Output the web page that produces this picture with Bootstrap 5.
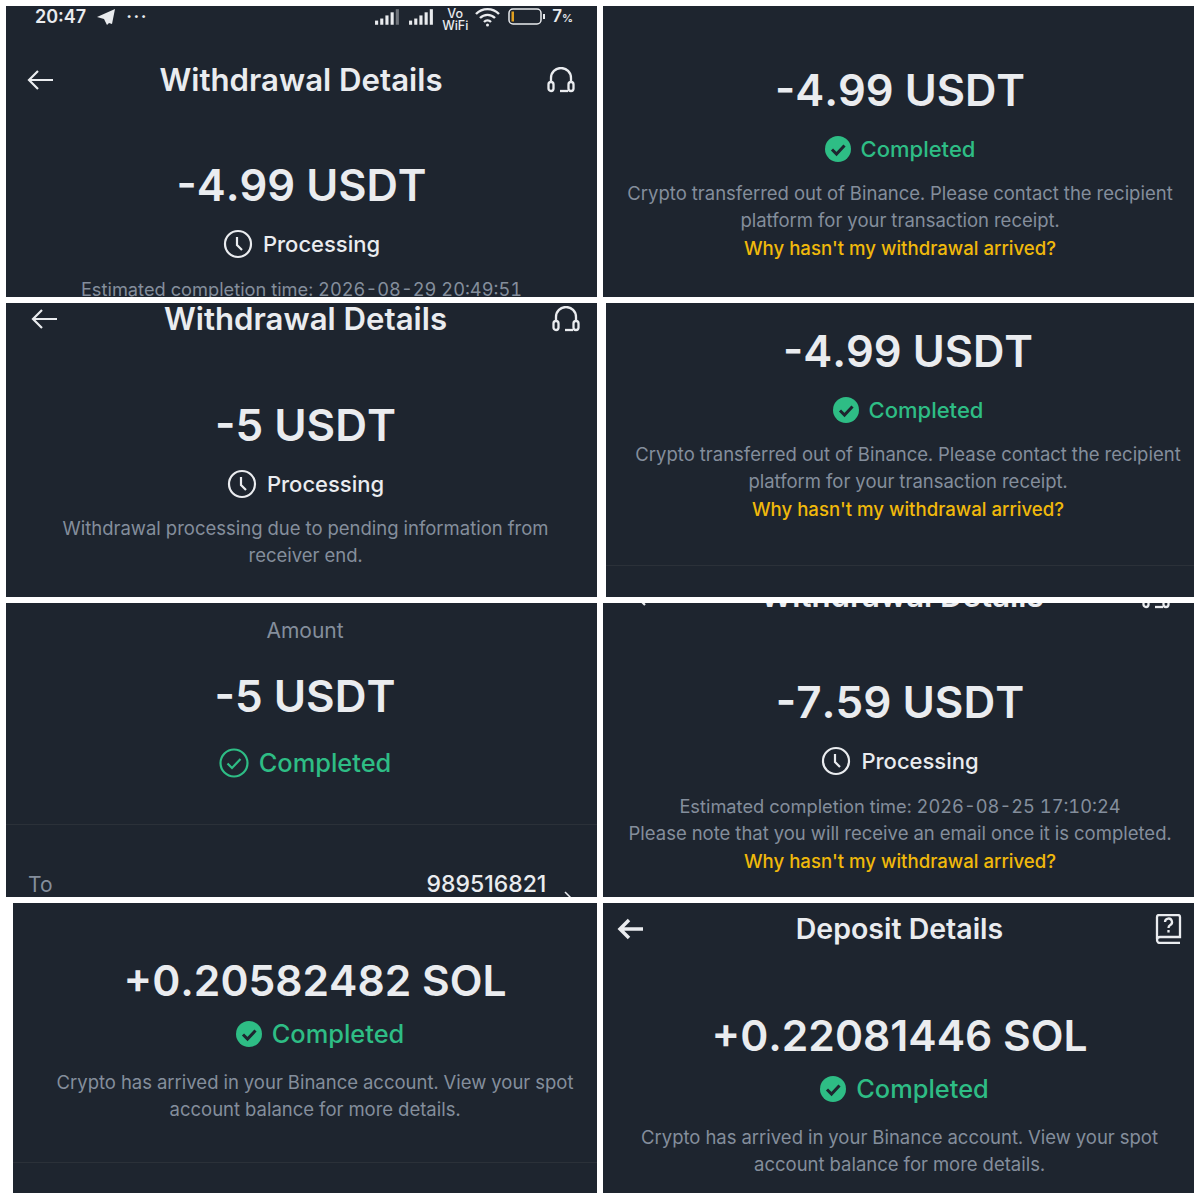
<!DOCTYPE html>
<html lang="en">

<head>
    <meta charset="UTF-8">
    <meta name="viewport" content="width=device-width, initial-scale=1.0">
    <title>Transaction details</title>
    <link href="https://cdn.jsdelivr.net/npm/bootstrap@5.3.3/dist/css/bootstrap.min.css" rel="stylesheet">
    <style>
        body { background: #fff; font-family: Inter, "Liberation Sans", sans-serif; }
        .collage { width: 1200px; height: 1200px; padding: 6px 6px 6px 6px; gap: 6px; }
        .side { width: 591px; gap: 6px; }
        .pane { background: #1e252f; overflow: hidden; flex: none; }
        .h-a { height: 291px; }
        .h-b { height: 294px; }
        .h-c { height: 294px; }
        .h-d { height: 290px; }
        .inset-a { margin-left: 7px; }
        .inset-b { margin-left: 3px; }

        .status-bar { height: 22px; padding: 0 24px 0 29px; color: #e9ebee; font-size: 18px; font-weight: 600; line-height: 22px; }
        .tray { gap: 6px; }
        .dots { letter-spacing: 1.5px; }
        .vo-wifi { width: 26px; margin-top: 6px; font-size: 12.500px; font-weight: 500; line-height: 12.500px; text-align: center; }
        .pct { font-size: 17px; }
        .pct small { font-size: 11px; }

        .head { display: grid; grid-template-columns: 1fr auto 1fr; align-items: center; height: 40px; }
        .head-title { color: #eaecef; font-size: 31.200px; font-weight: 600; line-height: 40px; white-space: nowrap; }
        .head-dep { font-size: 28.500px; }
        .head svg { display: block; }
        .head .end { justify-self: end; }

        .amt { color: #eaecef; font-size: 44px; font-weight: 600; line-height: 48px; text-align: center; white-space: nowrap; font-kerning: none; }
        .amt-mid { font-size: 43.500px; }
        .amt-sol { font-size: 42.600px; }
        .state { height: 32px; margin-top: 19px; gap: 10px; color: #eaecef; font-size: 22px; font-weight: 500; line-height: 32px; }
        .state-ok { color: #2ebd85; }
        .state-big { font-size: 25.400px; }
        .state-tight { margin-top: 13px; margin-left: 10px; }
        .note { margin-top: 15px; color: #848e9c; font-size: 18.500px; line-height: 27.400px; text-align: center; font-variant-numeric: tabular-nums; white-space: nowrap; }
        .note a { color: #f0b90b; font-size: 18.600px; font-weight: 500; text-decoration: none; }
        .note-date { font-size: 18.250px; }
        .note-after-tight { margin-top: 19px; }
        .rule { height: 1px; background: #2b3139; }

        .p1a { padding: 0 22px 0 21px; margin-top: 32px; }
        .p1a-amt { margin-top: 61px; }
        .p1a-note { margin-top: 16px; }
        .p1b { padding: 60px 0 0 3px; }
        .p2a { padding: 0 17px 0 25px; }
        .p2a .head { margin-top: -4px; }
        .p2a-amt { margin-top: 62px; }
        .p2b { height: 262px; padding: 24px 0 0 16px; }
        .p3a { height: 221px; padding: 14px 0 0 7px; }
        .amount-label { color: #848e9c; font-size: 21px; line-height: 28px; text-align: center; }
        .p3a .amt { margin-top: 27px; }
        .p3a .state { margin-top: 27px; }
        .to-row { padding: 46px 0 0 22px; font-size: 21px; line-height: 26px; position: relative; }
        .to-label { color: #848e9c; }
        .to-value { color: #eaecef; font-size: 23px; font-weight: 500; margin-left: 374px; }
        .to-mark { position: absolute; left: 558px; top: 66px; }
        .p3b-top { margin-top: -27px; padding: 0 0 0 3px; }
        .p3b-head { padding: 0 24px 0 28px; }
        .p3b-amt { margin-top: 62px; }
        .p3b-top .note { margin-top: 16px; }
        .p4a { height: 259px; padding: 54px 0 0 20px; }
        .p4b { padding: 6px 12px 0 14px; }
        .p4b-amt { margin-top: 63px; }
    </style>
</head>

<body>
    <div class="collage d-flex">
        <!-- left column -->
        <div class="side d-flex flex-column">
            <div class="pane h-a">
                <div class="status-bar d-flex align-items-center">
                    <span>20:47</span>
                    <svg class="ms-2" width="24" height="18" viewBox="0 0 24 18"><path d="M21 1 3 9l7 2 3 6 2-2 3 1z" fill="#e9ebee"/></svg>
                    <span class="ms-2 dots">&middot;&middot;&middot;</span>
                    <div class="ms-auto d-flex align-items-center tray">
                        <svg width="28" height="17" viewBox="0 0 27 16" fill="#e9ebee"><rect x="1" y="11" width="3" height="4"/><rect x="6" y="9" width="3" height="6"/><rect x="11" y="6" width="3" height="9"/><rect x="16" y="3" width="3" height="12"/><rect x="21" y="0" width="3" height="15" opacity=".4"/></svg>
                        <svg width="28" height="17" viewBox="0 0 27 16" fill="#e9ebee"><rect x="1" y="11" width="3" height="4"/><rect x="6" y="9" width="3" height="6"/><rect x="11" y="6" width="3" height="9"/><rect x="16" y="3" width="3" height="12"/><rect x="21" y="0" width="3" height="15"/></svg>
                        <div class="vo-wifi">Vo<br>WiFi</div>
                        <svg width="28" height="24" viewBox="0 0 28 24" fill="none" stroke="#e9ebee" stroke-width="2.400"><path d="M2 9a16 16 0 0 1 23 0M6 13a10.500 10.500 0 0 1 15 0M10 17a5 5 0 0 1 7 0"/><circle cx="13.500" cy="20" r="1.500" fill="#e9ebee" stroke="none"/></svg>
                        <svg width="38" height="18" viewBox="0 0 38 18" fill="none"><rect x="1" y="1" width="32" height="15" rx="4" stroke="#e9ebee" stroke-width="1.500"/><rect x="3.500" y="3.500" width="2.500" height="10" fill="#e0a020"/><rect x="35" y="6" width="2" height="5" fill="#e9ebee"/></svg>
                        <span class="pct">7<small>%</small></span>
                    </div>
                </div>
                <div class="head p1a">
                    <svg width="26" height="22" viewBox="0 0 26 22" fill="none" stroke="#eaecef" stroke-width="2.200"><path d="M26 11H2M11 2l-9 9 9 9"/></svg>
                    <div class="head-title">Withdrawal Details</div>
                    <svg class="end" width="28" height="26" viewBox="0 0 28 26" fill="none" stroke="#eaecef" stroke-width="2.300"><path d="M4 15V11a10 10 0 0 1 20 0v4"/><rect x="1.500" y="15" width="5" height="9" rx="2.500"/><rect x="21.500" y="15" width="5" height="9" rx="2.500"/><path d="M13 24h8"/></svg>
                </div>
                <div class="amt amt-mid p1a-amt">-4.99 USDT</div>
                <div class="state d-flex justify-content-center align-items-center">
                    <svg width="30" height="30" viewBox="0 0 30 30" fill="none" stroke="#eaecef" stroke-width="2.200"><circle cx="15" cy="15" r="13"/><path d="M14 8v8l5 5"/></svg>
                    <span>Processing</span>
                </div>
                <div class="note note-date p1a-note">Estimated completion time: 2026-08-29 20:49:51</div>
            </div>

            <div class="pane h-b">
                <div class="p2a">
                    <div class="head">
                        <svg width="26" height="22" viewBox="0 0 26 22" fill="none" stroke="#eaecef" stroke-width="2.200"><path d="M26 11H2M11 2l-9 9 9 9"/></svg>
                        <div class="head-title">Withdrawal Details</div>
                        <svg class="end" width="28" height="26" viewBox="0 0 28 26" fill="none" stroke="#eaecef" stroke-width="2.300"><path d="M4 15V11a10 10 0 0 1 20 0v4"/><rect x="1.500" y="15" width="5" height="9" rx="2.500"/><rect x="21.500" y="15" width="5" height="9" rx="2.500"/><path d="M13 24h8"/></svg>
                    </div>
                    <div class="amt p2a-amt">-5 USDT</div>
                    <div class="state d-flex justify-content-center align-items-center">
                        <svg width="30" height="30" viewBox="0 0 30 30" fill="none" stroke="#eaecef" stroke-width="2.200"><circle cx="15" cy="15" r="13"/><path d="M14 8v8l5 5"/></svg>
                        <span>Processing</span>
                    </div>
                    <div class="note">Withdrawal processing due to pending information from<br>receiver end.</div>
                </div>
            </div>

            <div class="pane h-c">
                <div class="p3a">
                    <div class="amount-label">Amount</div>
                    <div class="amt">-5 USDT</div>
                    <div class="state state-ok state-big d-flex justify-content-center align-items-center">
                        <svg width="30" height="30" viewBox="0 0 30 30" fill="none" stroke="#2ebd85" stroke-width="2.200"><circle cx="15" cy="15" r="13.500"/><path d="m8.500 15.500 4.500 4.500 8.500-9"/></svg>
                        <span>Completed</span>
                    </div>
                </div>
                <div class="rule"></div>
                <div class="to-row">
                    <span class="to-label">To</span><span class="to-value">989516821</span>
                    <svg class="to-mark" width="8" height="8" viewBox="0 0 8 8" fill="none" stroke="#eaecef" stroke-width="1.500"><path d="m1 1 6 6"/></svg>
                </div>
            </div>

            <div class="pane h-d inset-a">
                <div class="p4a">
                    <div class="amt amt-sol">+0.20582482 SOL</div>
                    <div class="state state-ok state-big state-tight d-flex justify-content-center align-items-center">
                        <svg width="26" height="26" viewBox="0 0 26 26"><circle cx="13" cy="13" r="13" fill="#2ebd85"/><path d="m7 13.500 4.500 4.500 8-8.500" fill="none" stroke="#1e252f" stroke-width="3"/></svg>
                        <span>Completed</span>
                    </div>
                    <div class="note note-after-tight">Crypto has arrived in your Binance account. View your spot<br>account balance for more details.</div>
                </div>
                <div class="rule"></div>
            </div>
        </div>

        <!-- right column -->
        <div class="side d-flex flex-column">
            <div class="pane h-a">
                <div class="p1b">
                    <div class="amt amt-mid">-4.99 USDT</div>
                    <div class="state state-ok d-flex justify-content-center align-items-center">
                        <svg width="26" height="26" viewBox="0 0 26 26"><circle cx="13" cy="13" r="13" fill="#2ebd85"/><path d="m7 13.500 4.500 4.500 8-8.500" fill="none" stroke="#1e252f" stroke-width="3"/></svg>
                        <span>Completed</span>
                    </div>
                    <div class="note">Crypto transferred out of Binance. Please contact the recipient<br>platform for your transaction receipt.<br><a href="#">Why hasn't my withdrawal arrived?</a></div>
                </div>
            </div>

            <div class="pane h-b inset-b">
                <div class="p2b">
                    <div class="amt amt-mid">-4.99 USDT</div>
                    <div class="state state-ok d-flex justify-content-center align-items-center">
                        <svg width="26" height="26" viewBox="0 0 26 26"><circle cx="13" cy="13" r="13" fill="#2ebd85"/><path d="m7 13.500 4.500 4.500 8-8.500" fill="none" stroke="#1e252f" stroke-width="3"/></svg>
                        <span>Completed</span>
                    </div>
                    <div class="note">Crypto transferred out of Binance. Please contact the recipient<br>platform for your transaction receipt.<br><a href="#">Why hasn't my withdrawal arrived?</a></div>
                </div>
                <div class="rule"></div>
            </div>

            <div class="pane h-c">
                <div class="p3b-top">
                    <div class="head p3b-head">
                        <svg width="26" height="22" viewBox="0 0 26 22" fill="none" stroke="#eaecef" stroke-width="2.200"><path d="M26 11H2M11 2l-9 9 9 9"/></svg>
                        <div class="head-title">Withdrawal Details</div>
                        <svg class="end" width="28" height="26" viewBox="0 0 28 26" fill="none" stroke="#eaecef" stroke-width="2.300"><path d="M4 15V11a10 10 0 0 1 20 0v4"/><rect x="1.500" y="15" width="5" height="9" rx="2.500"/><rect x="21.500" y="15" width="5" height="9" rx="2.500"/><path d="M13 24h8"/></svg>
                    </div>
                    <div class="amt p3b-amt">-7.59 USDT</div>
                    <div class="state d-flex justify-content-center align-items-center">
                        <svg width="30" height="30" viewBox="0 0 30 30" fill="none" stroke="#eaecef" stroke-width="2.200"><circle cx="15" cy="15" r="13"/><path d="M14 8v8l5 5"/></svg>
                        <span>Processing</span>
                    </div>
                    <div class="note"><span class="note-date">Estimated completion time: 2026-08-25 17:10:24</span><br>Please note that you will receive an email once it is completed.<br><a href="#">Why hasn't my withdrawal arrived?</a></div>
                </div>
            </div>

            <div class="pane h-d">
                <div class="p4b">
                    <div class="head">
                        <svg width="26" height="22" viewBox="0 0 26 22" fill="none" stroke="#eaecef" stroke-width="3.500"><path d="M26 11H3M12 2l-9 9 9 9"/></svg>
                        <div class="head-title head-dep">Deposit Details</div>
                        <svg class="end" width="27" height="30" viewBox="0 0 27 30" fill="none" stroke="#eaecef" stroke-width="2.300"><path d="M2 25V3a2 2 0 0 1 2-2h19a2 2 0 0 1 2 2v20H5a3 3 0 0 0 0 6h20"/><path d="M10 8a3.500 3.500 0 1 1 5 3.200c-1 .6-1.500 1.300-1.500 2.800M13.500 16v2.500"/></svg>
                    </div>
                    <div class="amt amt-sol p4b-amt">+0.22081446 SOL</div>
                    <div class="state state-ok state-big state-tight d-flex justify-content-center align-items-center">
                        <svg width="26" height="26" viewBox="0 0 26 26"><circle cx="13" cy="13" r="13" fill="#2ebd85"/><path d="m7 13.500 4.500 4.500 8-8.500" fill="none" stroke="#1e252f" stroke-width="3"/></svg>
                        <span>Completed</span>
                    </div>
                    <div class="note note-after-tight">Crypto has arrived in your Binance account. View your spot<br>account balance for more details.</div>
                </div>
            </div>
        </div>
    </div>

    <script src="https://cdn.jsdelivr.net/npm/bootstrap@5.3.3/dist/js/bootstrap.bundle.min.js"></script>
</body>

</html>
